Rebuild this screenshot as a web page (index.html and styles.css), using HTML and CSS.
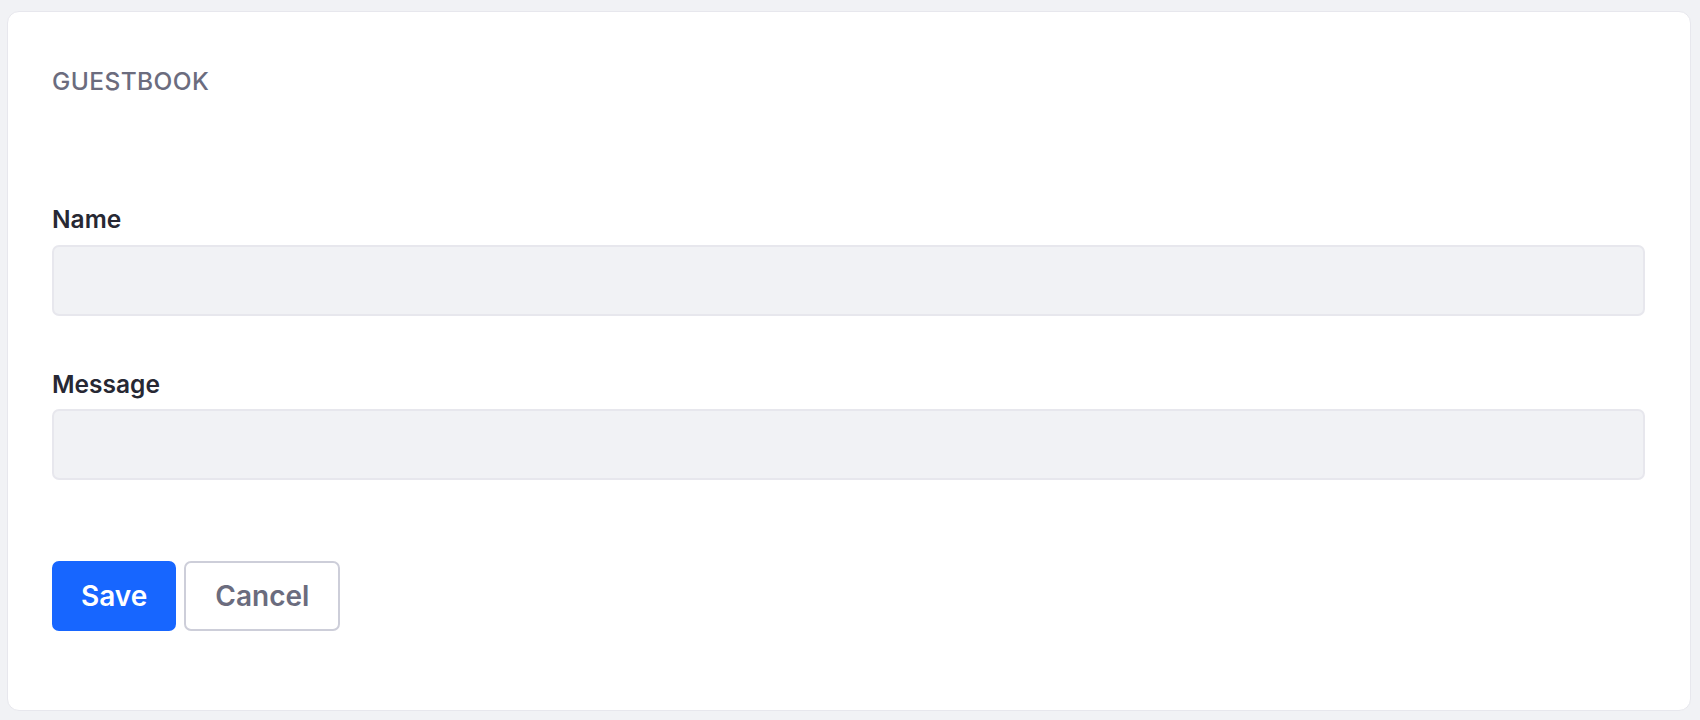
FILE: index.html
```html
<!DOCTYPE html>
<html lang="en">
<head>
<meta charset="utf-8">
<title>Guestbook</title>
<link rel="stylesheet" href="styles.css">
</head>
<body>
<main class="sheet">
  <h2 class="sheet-subtitle">Guestbook</h2>
  <form class="form">
    <div class="form-group">
      <label class="label" for="name">Name</label>
      <input class="form-control" id="name" type="text">
    </div>
    <div class="form-group">
      <label class="label" for="message">Message</label>
      <input class="form-control" id="message" type="text">
    </div>
    <div class="btn-group">
      <button type="button" class="btn btn-primary">Save</button>
      <button type="button" class="btn btn-secondary">Cancel</button>
    </div>
  </form>
</main>
</body>
</html>
```

FILE: styles.css
```css
html, body {
  margin: 0;
  height: 100%;
}
body {
  background: #f1f2f5;
  font-family: Inter, "Liberation Sans", sans-serif;
  padding: 11px 9px 9px 7px;
  box-sizing: border-box;
}
.sheet {
  box-sizing: border-box;
  height: 700px;
  background: #fff;
  border: 1px solid #e7e7ed;
  border-radius: 12px;
  padding: 51px 45px 0 44px;
}
.sheet-subtitle {
  margin: 0;
  font-size: 24.5px;
  line-height: 36.75px;
  font-weight: 550;
  letter-spacing: 0.4px;
  text-transform: uppercase;
  color: #6b6c7e;
}
.form {
  margin-top: 101px;
  display: flex;
  flex-direction: column;
}
.form-group {
  display: flex;
  flex-direction: column;
  margin-bottom: 50px;
}
.label {
  font-size: 24.5px;
  line-height: 36.75px;
  font-weight: 600;
  color: #272833;
  margin-bottom: 7px;
}
.form-control {
  box-sizing: border-box;
  height: 71px;
  background: #f1f2f5;
  border: 2px solid #e7e7ed;
  border-radius: 7px;
  font: inherit;
  outline: none;
}
.btn-group {
  display: flex;
  gap: 8px;
  margin-top: 31px;
}
.btn {
  font-family: Inter, "Liberation Sans", sans-serif;
  font-size: 28px;
  line-height: 42px;
  font-weight: 600;
  padding: 12px 27px;
  border-radius: 7px;
  border: 2px solid transparent;
  cursor: pointer;
}
.btn-primary {
  background: #1766ff;
  color: #fff;
  border-color: #1766ff;
}
.btn-secondary {
  background: #fff;
  color: #6b6c7e;
  border-color: #cdced9;
  padding: 12px 29px;
}
```
